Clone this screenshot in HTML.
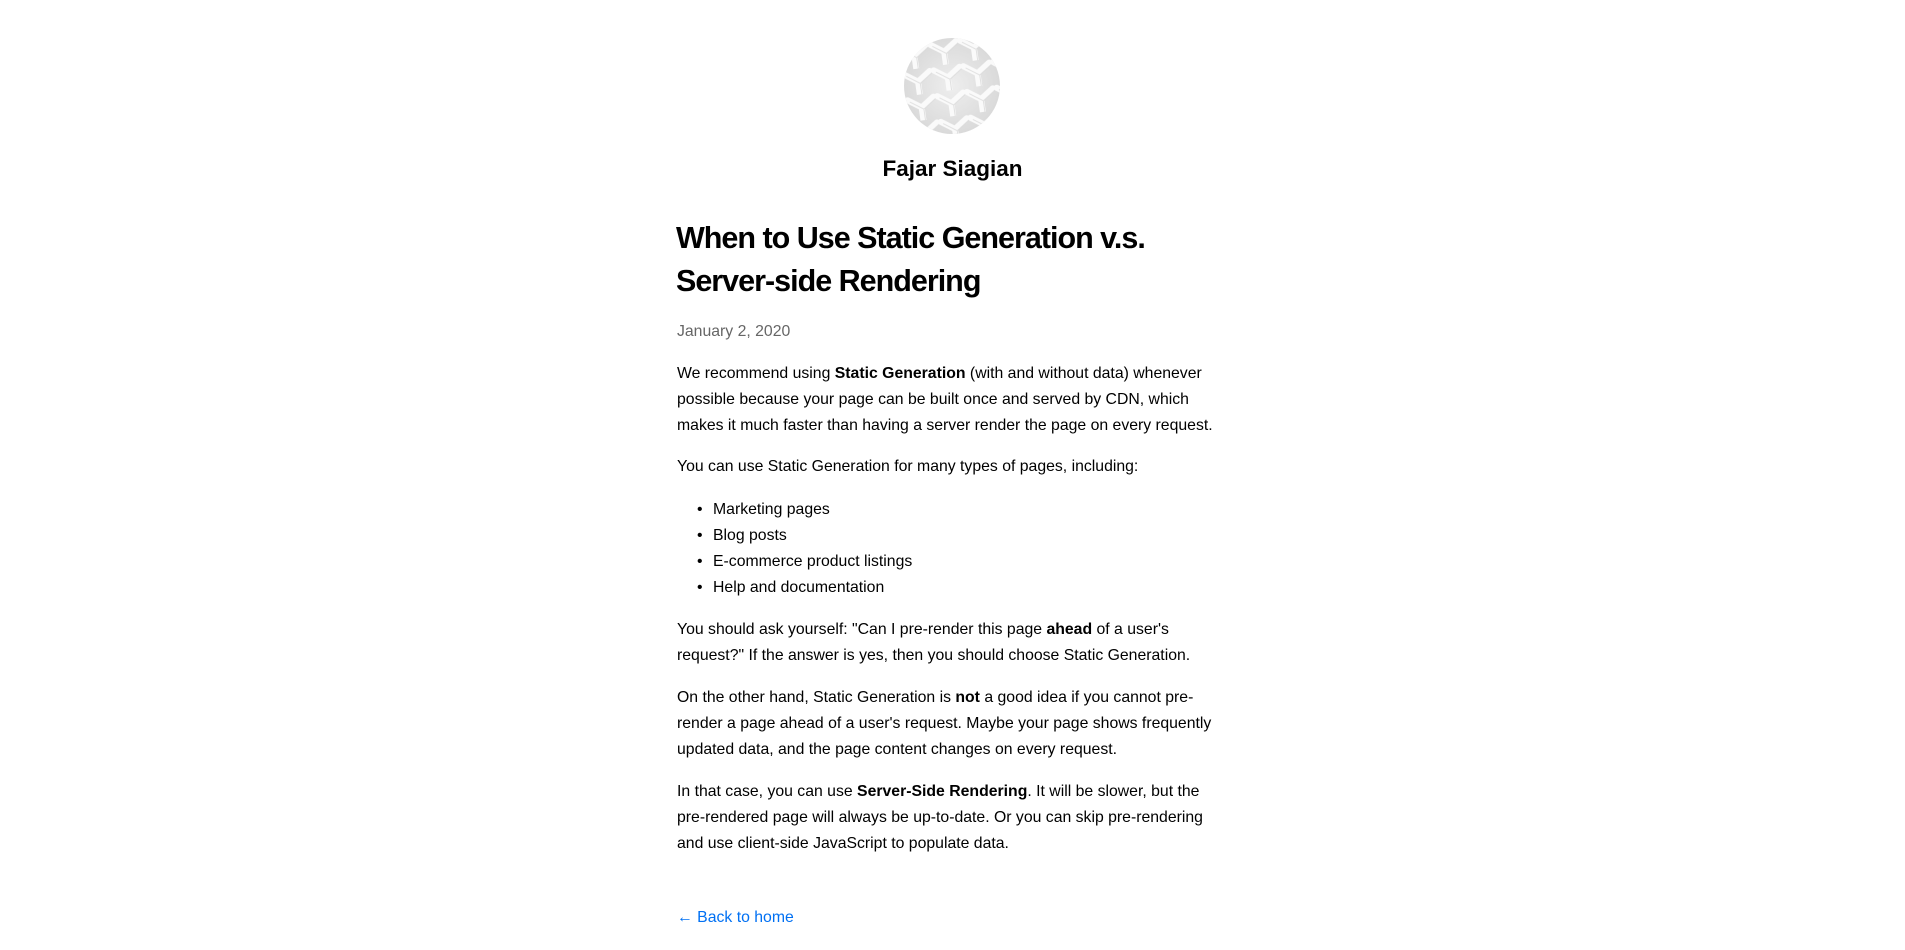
<!DOCTYPE html>
<html><head><meta charset="utf-8"><style>
html,body{margin:0;padding:0;background:#fff;width:1905px;height:950px;overflow:hidden;position:relative;font-family:"Liberation Sans",Arial,sans-serif;color:#000}
.l{position:absolute;left:677px;white-space:nowrap;font-size:15.8px;line-height:26px;height:26px}
.li{left:713px}
.dot{position:absolute;left:-16px;top:0}
b{font-weight:700}
</style></head><body>
<svg style="position:absolute;left:904px;top:38px" width="96" height="96" viewBox="0 0 96 96">
<defs>
<clipPath id="c"><circle cx="48" cy="48" r="48"/></clipPath>
<radialGradient id="g" cx="50%" cy="50%" r="60%"><stop offset="0" stop-color="#eeeeee"/><stop offset="1" stop-color="#d6d6d6"/></radialGradient>
<pattern id="p" width="30" height="26" patternUnits="userSpaceOnUse">
<path d="M2 4 L15 13 L28 4 M15 13 L15 26" stroke="#fafafa" stroke-width="6" fill="none" stroke-linecap="round"/>
<path d="M2 4 L15 13 L28 4 M15 13 L15 26" stroke="#cfcfcf" stroke-width="1" fill="none" transform="translate(2,2)" opacity=".6"/>
</pattern>
</defs>
<g clip-path="url(#c)"><rect width="96" height="96" fill="url(#g)"/><rect width="96" height="96" fill="url(#p)" transform="rotate(-8 48 48)"/></g>
</svg>
<div style="position:absolute;left:0;width:1905px;text-align:center;top:153px;font-size:22.5px;line-height:32px;font-weight:700">Fajar Siagian</div>
<div style="position:absolute;left:676px;top:217px;font-size:30.5px;line-height:43px;font-weight:700;letter-spacing:-1px;white-space:nowrap">When to Use Static Generation v.s.<br>Server-side Rendering</div>
<div class="l" style="top:319px;color:#666">January 2, 2020</div>
<div class="l" style="top:361px">We recommend using <b>Static Generation</b> (with and without data) whenever</div>
<div class="l" style="top:387px">possible because your page can be built once and served by CDN, which</div>
<div class="l" style="top:413px">makes it much faster than having a server render the page on every request.</div>
<div class="l" style="top:454px">You can use Static Generation for many types of pages, including:</div>
<div class="l li" style="top:497px"><span class="dot">•</span>Marketing pages</div>
<div class="l li" style="top:523px"><span class="dot">•</span>Blog posts</div>
<div class="l li" style="top:549px"><span class="dot">•</span>E-commerce product listings</div>
<div class="l li" style="top:575px"><span class="dot">•</span>Help and documentation</div>
<div class="l" style="top:617px">You should ask yourself: "Can I pre-render this page <b>ahead</b> of a user's</div>
<div class="l" style="top:643px">request?" If the answer is yes, then you should choose Static Generation.</div>
<div class="l" style="top:685px">On the other hand, Static Generation is <b>not</b> a good idea if you cannot pre-</div>
<div class="l" style="top:711px">render a page ahead of a user's request. Maybe your page shows frequently</div>
<div class="l" style="top:737px">updated data, and the page content changes on every request.</div>
<div class="l" style="top:779px">In that case, you can use <b>Server-Side Rendering</b>. It will be slower, but the</div>
<div class="l" style="top:805px">pre-rendered page will always be up-to-date. Or you can skip pre-rendering</div>
<div class="l" style="top:831px">and use client-side JavaScript to populate data.</div>
<div class="l" style="top:905px;color:#0070f3">← Back to home</div>
</body></html>
